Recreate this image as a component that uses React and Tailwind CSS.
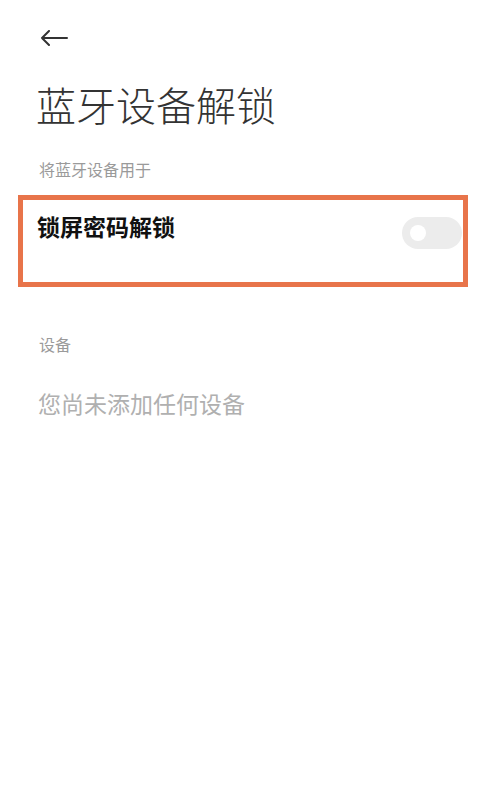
import React from "react";

const Toggle = () => (
  <div className="mt-[5px] mr-[1px] flex h-[32px] w-[60px] items-center rounded-full bg-[#ececec] pl-[8px]">
    <div className="h-[16px] w-[16px] rounded-full bg-white" />
  </div>
);

export default function App() {
  return (
    <div className="min-h-[807px] w-full bg-white font-['Noto_Sans_CJK_SC',sans-serif]">
      {/* Back */}
      <div className="pl-[40px] pt-[30px]">
        <svg width="28" height="16" viewBox="0 0 28 16" fill="none">
          <path
            d="M27 8H2M9 1L2 8L9 15"
            stroke="#333"
            strokeWidth="2"
            strokeLinecap="round"
            strokeLinejoin="round"
          />
        </svg>
      </div>

      <h1 className="mt-[34px] pl-[36px] text-[40px] font-light leading-[48px] text-[#333]">
        蓝牙设备解锁
      </h1>

      <p className="mt-[31px] pl-[39px] text-[16px] leading-[20px] text-[#9a9a9a]">
        将蓝牙设备用于
      </p>

      {/* Highlighted row */}
      <div className="mx-[18px] mt-[16px] flex h-[92px] w-[450px] items-start justify-between border-[5px] border-[#e8744a] pl-[14px] pt-[12px]">
        <span className="text-[23px] font-bold leading-[28px] text-[#111]">
          锁屏密码解锁
        </span>
        <Toggle />
      </div>

      <p className="mt-[47px] pl-[39px] text-[16px] leading-[20px] text-[#9a9a9a]">
        设备
      </p>

      <p className="mt-[35px] pl-[38px] text-[23px] leading-[28px] text-[#b0b0b0]">
        您尚未添加任何设备
      </p>
    </div>
  );
}
